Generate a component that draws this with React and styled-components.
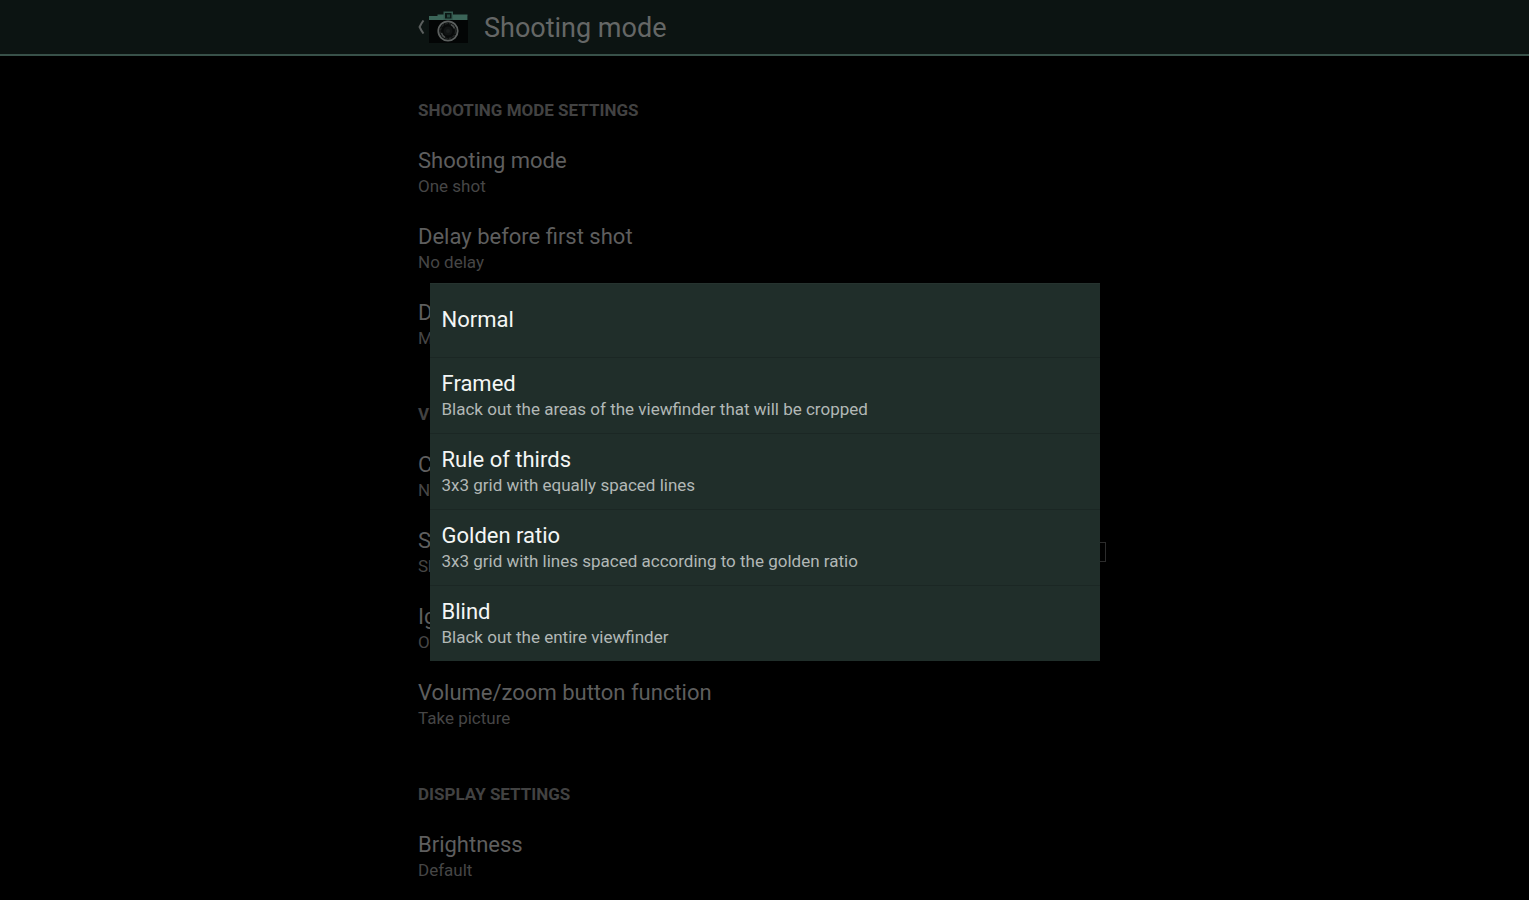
import { useState } from 'react';
import styled, { createGlobalStyle } from 'styled-components';

const GlobalStyles = createGlobalStyle`
    * {
        box-sizing: border-box;
    }
    body {
        margin: 0;
        background-color: #000;
        font-family: Roboto, 'Noto Sans', sans-serif;
    }
    button {
        border: 0;
        padding: 0;
        background: none;
        color: inherit;
        font-family: inherit;
        text-align: left;
    }
`;

const HeaderStyles = styled.header`
    background-color: #0c1412;
    border-bottom: 2px solid #385149;
`;

const Column = styled.div`
    width: 100%;
    max-width: 693px;
    margin: 0 auto;
`;

const HeaderContent = styled(Column)`
    display: flex;
    align-items: center;
    gap: 16px;
    height: 54px;
    h1 {
        margin: 0;
        padding-top: 2px;
        font-size: 27px;
        font-weight: 400;
        line-height: 32px;
        color: #656766;
    }
`;

const UpButton = styled.button`
    display: flex;
    align-items: center;
    gap: 3px;
    .chevron {
        width: 8px;
        height: 14px;
    }
    .camera {
        width: 39px;
        height: 32px;
    }
`;

const SettingsStyles = styled(Column)`
    padding-top: 2px;
`;

const CategoryTitle = styled.h2`
    margin: 0;
    padding: 40px 0 12px;
    font-size: 17px;
    font-weight: 700;
    line-height: 24px;
    text-transform: uppercase;
    color: #424242;
`;

const PreferenceStyles = styled.div`
    display: flex;
    align-items: center;
    justify-content: space-between;
    padding: 13px 5px 13px 0;
`;

const Texts = styled.span`
    display: block;
    .title {
        display: block;
        font-size: 22px;
        line-height: 28px;
        color: ${({ $dimmed }) => ($dimmed ? '#5e5e5e' : '#f4f6f5')};
    }
    .summary {
        display: block;
        font-size: 17px;
        line-height: 22px;
        color: ${({ $dimmed }) => ($dimmed ? '#464646' : '#b2b8b6')};
    }
`;

const Checkbox = styled.input`
    appearance: none;
    width: 20px;
    height: 20px;
    margin: 0;
    border: 1px solid #2c2c2c;
`;

const Overlay = styled.div`
    position: fixed;
    inset: 0;
    display: flex;
    align-items: center;
    justify-content: center;
    padding-top: 44px;
`;

const Dialog = styled.div`
    display: flex;
    flex-direction: column;
    width: 100%;
    max-width: 670px;
    background-color: #202e2a;
    border-top: 1px solid #26332f;
`;

const Option = styled.button`
    display: flex;
    align-items: center;
    min-height: 73px;
    padding: 12px 12px 13px;
    & + & {
        border-top: 1px solid #1b2724;
    }
`;

const categories = [
    {
        name: 'Shooting mode settings',
        preferences: [
            { title: 'Shooting mode', summary: 'One shot' },
            { title: 'Delay before first shot', summary: 'No delay' },
            { title: 'Delay between shots', summary: 'Minimum' },
        ],
    },
    {
        name: 'Viewfinder settings',
        preferences: [
            { title: 'Composition', summary: 'Normal' },
            { title: 'Show toolbar', summary: 'Show buttons', checkbox: true },
            { title: 'Ignore touches', summary: 'Off' },
            { title: 'Volume/zoom button function', summary: 'Take picture' },
        ],
    },
    {
        name: 'Display settings',
        preferences: [{ title: 'Brightness', summary: 'Default' }],
    },
];

const options = [
    { title: 'Normal' },
    {
        title: 'Framed',
        summary: 'Black out the areas of the viewfinder that will be cropped',
    },
    { title: 'Rule of thirds', summary: '3x3 grid with equally spaced lines' },
    {
        title: 'Golden ratio',
        summary: '3x3 grid with lines spaced according to the golden ratio',
    },
    { title: 'Blind', summary: 'Black out the entire viewfinder' },
];

function CameraIcon() {
    return (
        <svg className="camera" viewBox="0 0 39 32" aria-hidden="true">
            <rect y="5" width="39" height="27" fill="#030505" />
            <path d="M0 5h8.500V3.500H38.500V9H0z" fill="#3b6558" />
            <rect x="14.500" y="0.500" width="9.500" height="8.500" fill="#34594e" />
            <rect x="16" y="2" width="6.500" height="5.500" fill="#0b1714" />
            <rect x="18" y="3.500" width="3" height="3" fill="#24483e" />
            <circle cx="19" cy="20" r="10.500" fill="#080a0a" />
            <circle
                cx="19"
                cy="20"
                r="9.700"
                fill="none"
                stroke="#5c605f"
                strokeWidth="1.800"
            />
            <circle
                cx="19"
                cy="20"
                r="7.500"
                fill="none"
                stroke="#222625"
                strokeWidth="1.200"
                strokeDasharray="3 1"
            />
            <path
                d="M12.500 22a7 7 0 0 0 3.500 4.500M22 13.500a7 7 0 0 1 3.500 4"
                fill="none"
                stroke="#4a4e4d"
                strokeWidth="1.500"
            />
            <circle cx="19" cy="20" r="4.500" fill="#111414" />
            <circle cx="19" cy="20" r="2" fill="#1b1e1e" />
        </svg>
    );
}

function Preference({ title, summary, checkbox }) {
    const [checked, setChecked] = useState(false);

    return (
        <PreferenceStyles as={checkbox ? 'label' : 'div'}>
            <Texts $dimmed>
                <span className="title">{title}</span>
                <span className="summary">{summary}</span>
            </Texts>
            {checkbox && (
                <Checkbox
                    type="checkbox"
                    checked={checked}
                    onChange={(e) => setChecked(e.target.checked)}
                />
            )}
        </PreferenceStyles>
    );
}

export default function App() {
    const [open, setOpen] = useState(true);

    return (
        <>
            <GlobalStyles />
            <HeaderStyles>
                <HeaderContent>
                    <UpButton aria-label="Back">
                        <svg
                            className="chevron"
                            viewBox="0 0 8 14"
                            aria-hidden="true"
                        >
                            <path
                                d="M5.500 0.500C4 2.500 2.500 5 1.600 7c0.900 2 2.400 4.500 3.900 6.500"
                                fill="none"
                                stroke="#5b5f5e"
                                strokeWidth="2"
                            />
                        </svg>
                        <CameraIcon />
                    </UpButton>
                    <h1>Shooting mode</h1>
                </HeaderContent>
            </HeaderStyles>
            <SettingsStyles as="main">
                {categories.map(({ name, preferences }) => (
                    <section key={name}>
                        <CategoryTitle>{name}</CategoryTitle>
                        {preferences.map((preference) => (
                            <Preference
                                key={preference.title}
                                {...preference}
                            />
                        ))}
                    </section>
                ))}
            </SettingsStyles>
            {open && (
                <Overlay>
                    <Dialog role="dialog" aria-label="Composition">
                        {options.map(({ title, summary }) => (
                            <Option key={title} onClick={() => setOpen(false)}>
                                <Texts>
                                    <span className="title">{title}</span>
                                    {summary && (
                                        <span className="summary">
                                            {summary}
                                        </span>
                                    )}
                                </Texts>
                            </Option>
                        ))}
                    </Dialog>
                </Overlay>
            )}
        </>
    );
}
